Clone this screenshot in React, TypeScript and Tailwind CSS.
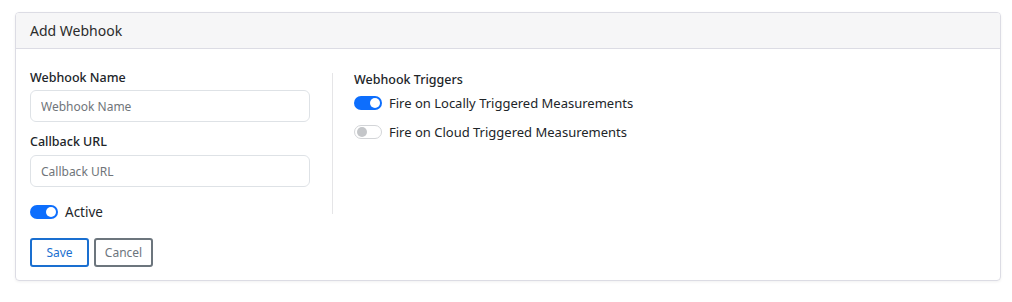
import React from "react";

const Toggle = ({ on }: { on: boolean }) =>
  on ? (
    <span className="relative inline-block w-[28px] h-[14px] rounded-full bg-[#0d6efd] shrink-0">
      <span className="absolute right-[2px] top-[2px] w-[10px] h-[10px] rounded-full bg-white" />
    </span>
  ) : (
    <span className="relative inline-block w-[28px] h-[14px] rounded-full border border-[#d3d5d8] bg-white shrink-0">
      <span className="absolute left-[2px] top-[1px] w-[10px] h-[10px] rounded-full bg-[#c4c6c9]" />
    </span>
  );

export default function App() {
  return (
    <div className="w-[1012px] h-[302px] bg-white pt-[12px] px-[15px] font-['Segoe_UI','Noto_Sans',sans-serif] text-[#212529]">
      <div className="w-[986px] h-[269px] border border-[#dcdce4] rounded-[4px] shadow-[0_1px_3px_rgba(0,0,0,0.06)] overflow-hidden">
        {/* Header */}
        <div className="h-[36px] bg-[#f6f6f7] border-b border-[#dcdce4] px-[14px] flex items-center text-[14px] text-[#2b2b2b]">
          Add Webhook
        </div>
        {/* Body */}
        <div className="flex px-[14px] pt-[20px]">
          <div className="w-[280px] flex flex-col">
            <label className="text-[12.5px] font-medium leading-[18px] mb-[3px]">Webhook Name</label>
            <input
              placeholder="Webhook Name"
              className="h-[32px] w-[280px] border border-[#dee2e6] rounded-[6px] px-[10px] text-[12px] placeholder:text-[#70757a] outline-none"
            />
            <label className="text-[12.5px] font-medium leading-[18px] mt-[11px] mb-[4px]">Callback URL</label>
            <input
              placeholder="Callback URL"
              className="h-[32px] w-[280px] border border-[#dee2e6] rounded-[6px] px-[10px] text-[12px] placeholder:text-[#70757a] outline-none"
            />
            <div className="flex items-center gap-[7px] mt-[16px] text-[13.5px] leading-[18px]">
              <Toggle on />
              <span>Active</span>
            </div>
            <div className="flex gap-[5px] mt-[17px]">
              <button className="w-[59px] h-[29px] border-2 border-[#1a6fd0] rounded-[3px] text-[#1a6fd0] text-[12px]">
                Save
              </button>
              <button className="w-[59px] h-[29px] border-2 border-[#6c757d] rounded-[3px] text-[#6c757d] text-[12px]">
                Cancel
              </button>
            </div>
          </div>
          <div className="w-px h-[141px] bg-[#e5e5e7] ml-[22px] mt-[4px]" />
          <div className="flex flex-col ml-[21px] pt-[2px]">
            <div className="text-[12.5px] font-medium leading-[18px]">Webhook Triggers</div>
            <div className="flex items-center gap-[7px] mt-[5px] text-[13px] leading-[18px]">
              <Toggle on />
              <span>Fire on Locally Triggered Measurements</span>
            </div>
            <div className="flex items-center gap-[7px] mt-[11px] text-[13px] leading-[18px]">
              <Toggle on={false} />
              <span>Fire on Cloud Triggered Measurements</span>
            </div>
          </div>
        </div>
      </div>
    </div>
  );
}
